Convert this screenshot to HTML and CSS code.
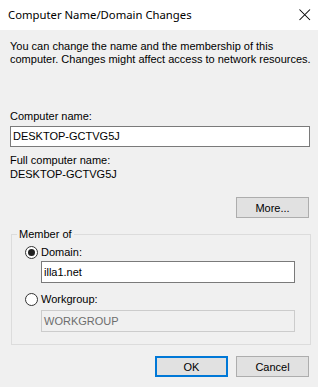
FILE: index.html
```html
<!DOCTYPE html>
<html>
<head>
<meta charset="utf-8">
<link rel="stylesheet" href="styles.css">
</head>
<body>
<div class="window">
  <div class="titlebar">
    <span class="title">Computer Name/Domain Changes</span>
    <svg class="close" width="12" height="12" viewBox="0 0 12 12"><path d="M0.5 0.5 L11 11 M11 0.5 L0.5 11" stroke="#000" stroke-width="1.05" fill="none"/></svg>
  </div>
  <div class="content">
    <p class="intro">You can change the name and the membership of this<br>computer. Changes might affect access to network resources.</p>
    <div class="label name-label">Computer name:</div>
    <div class="textbox name-box">DESKTOP-GCTVG5J</div>
    <div class="label full-label">Full computer name:</div>
    <div class="label full-value">DESKTOP-GCTVG5J</div>
    <div class="more-row"><button class="btn">More...</button></div>
    <fieldset class="group">
      <legend>Member of</legend>
      <div class="radio-row"><span class="radio checked"></span><span>Domain:</span></div>
      <div class="textbox sub-box domain-box">illa1.net</div>
      <div class="radio-row wg-row"><span class="radio"></span><span>Workgroup:</span></div>
      <div class="textbox sub-box disabled">WORKGROUP</div>
    </fieldset>
    <div class="buttons">
      <button class="btn default">OK</button>
      <button class="btn">Cancel</button>
    </div>
  </div>
</div>
</body>
</html>
```
FILE: styles.css
```css
html, body {
  margin: 0;
  padding: 0;
}
body {
  width: 318px;
  height: 387px;
  overflow: hidden;
  background: #f0f0f0;
  font-family: "Liberation Sans", Arial, sans-serif;
  font-size: 11px;
  line-height: 13px;
  color: #000;
}
.window {
  width: 318px;
  height: 387px;
  display: flex;
  flex-direction: column;
}
.titlebar {
  height: 30px;
  background: #fff;
  display: flex;
  align-items: flex-start;
  justify-content: space-between;
  padding-left: 8px;
  flex: none;
}
.title {
  font-family: "Noto Sans", "Open Sans", sans-serif;
  font-size: 11.3px;
  line-height: 30px;
  color: #000;
}
.close {
  margin-top: 9px;
  margin-right: 7px;
}
.content {
  flex: 1;
  background: #f0f0f0;
  padding: 10px 8px 0 10px;
  display: flex;
  flex-direction: column;
  align-items: flex-start;
}
.intro {
  margin: 0;
  white-space: nowrap;
}
.name-label {
  margin-top: 44px;
}
.textbox {
  box-sizing: border-box;
  background: #fff;
  border: 1px solid #7a7a7a;
  padding-left: 2px;
  display: flex;
  align-items: center;
}
.name-box {
  margin-top: 3px;
  width: 300px;
  height: 21px;
}
.full-label {
  margin-top: 7px;
}
.full-value {
  margin-top: 1px;
}
.more-row {
  align-self: stretch;
  display: flex;
  justify-content: flex-end;
  margin-top: 16px;
  padding-right: 1px;
}
.btn {
  box-sizing: border-box;
  width: 73px;
  height: 21px;
  background: #e1e1e1;
  border: 1px solid #adadad;
  padding: 0;
  margin: 0;
  font-family: "Liberation Sans", Arial, sans-serif;
  font-size: 11px;
  color: #000;
}
.btn.default {
  border: 2px solid #0078d7;
}
.group {
  box-sizing: border-box;
  margin: 10px 0 0 1px;
  width: 300px;
  border: 1px solid #dcdcdc;
  padding: 5px 0 12px 13px;
  min-inline-size: 0;
}
.group legend {
  padding: 0 2px;
  margin-left: -8px;
  line-height: 13px;
}
.radio-row {
  display: flex;
  align-items: center;
  height: 13px;
}
.radio {
  box-sizing: border-box;
  width: 13px;
  height: 13px;
  border: 1px solid #333;
  border-radius: 50%;
  background: #fff;
  margin-right: 3px;
  display: flex;
  align-items: center;
  justify-content: center;
  flex: none;
}
.radio.checked::after {
  content: "";
  width: 7px;
  height: 7px;
  border-radius: 50%;
  background: #222;
}
.sub-box {
  margin-left: 16px;
  margin-top: 2px;
  width: 254px;
  height: 22px;
}
.wg-row {
  margin-top: 10px;
}
.disabled {
  margin-top: 4px;
  background: #f0f0f0;
  border-color: #cccccc;
  color: #6d6d6d;
}
.buttons {
  align-self: stretch;
  display: flex;
  justify-content: flex-end;
  gap: 8px;
  margin-top: 11px;
  padding-right: 1px;
}
```
